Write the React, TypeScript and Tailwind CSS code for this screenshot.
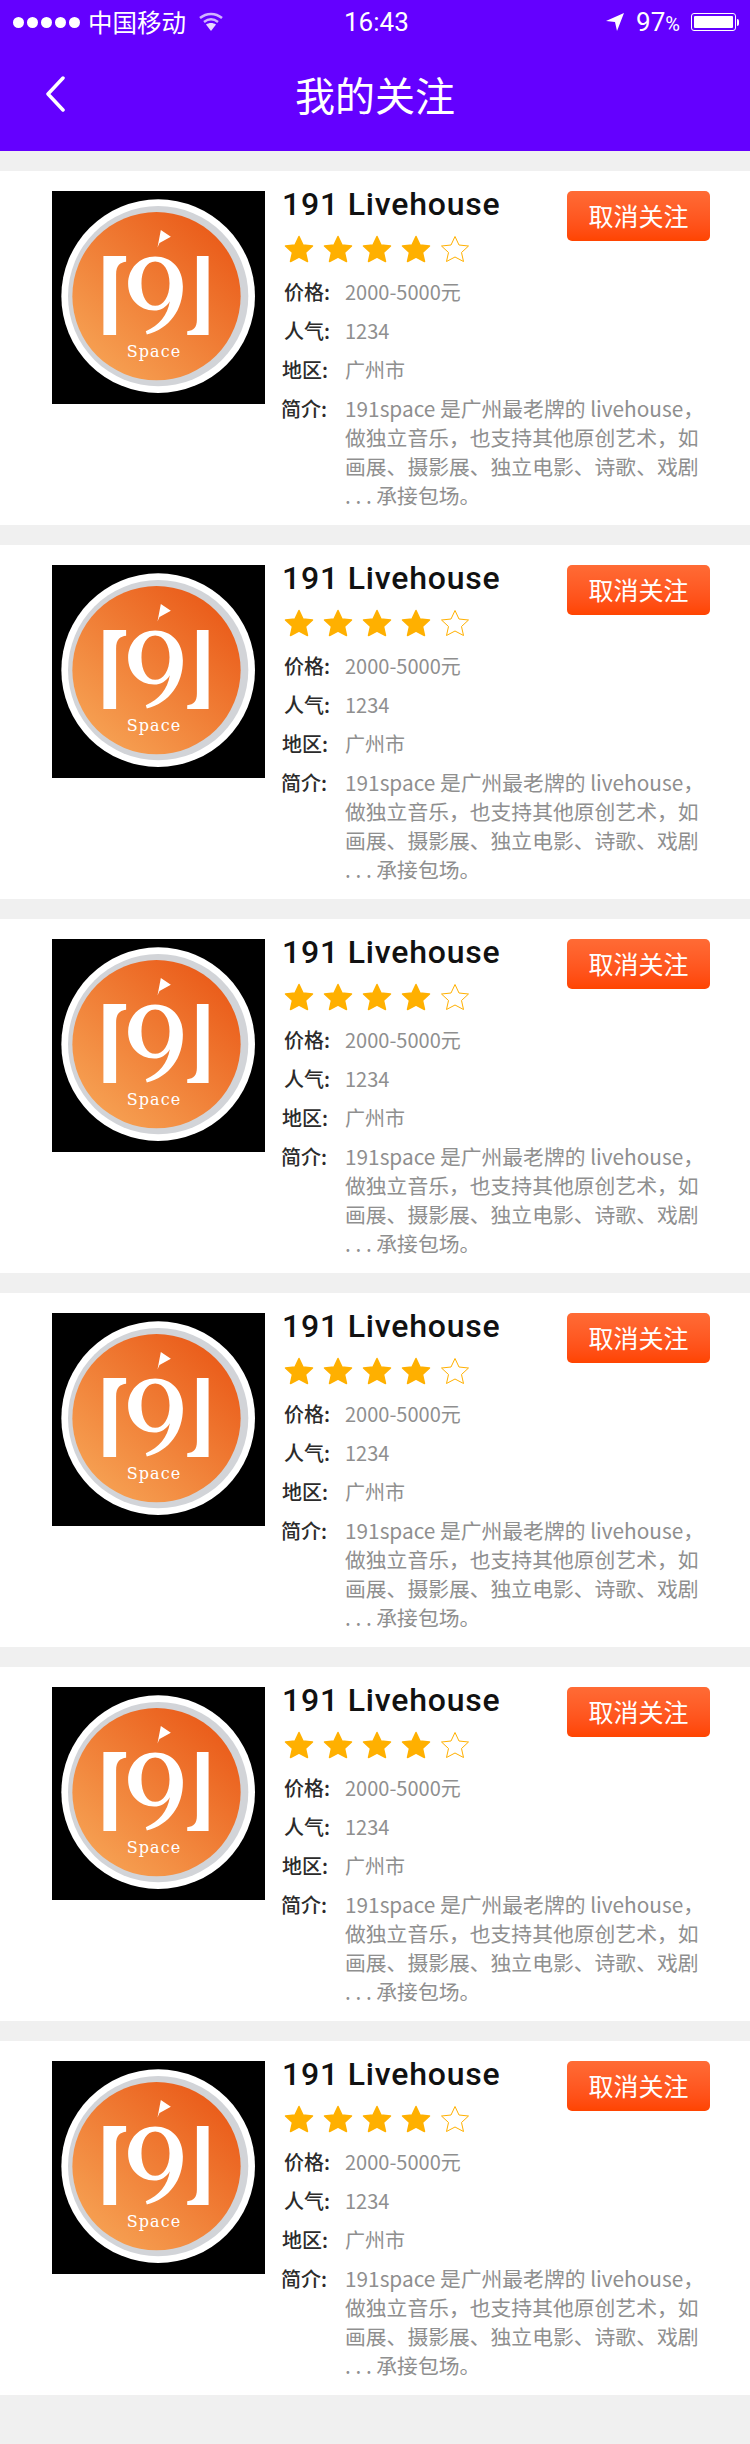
const venues = [1, 2, 3, 4, 5, 6];

// 191 Space logo, coordinates taken from the 213px image at 3x
const VenueLogo = () => (
  <svg viewBox="0 0 638 638" className="block h-[213px] w-[213px] shrink-0 bg-black">
    <defs>
      <linearGradient id="logoOrange" x1="0.15" y1="0.9" x2="0.85" y2="0.1">
        <stop offset="0" stopColor="#f6a052" />
        <stop offset="1" stopColor="#ea5c1a" />
      </linearGradient>
    </defs>
    <circle cx="318" cy="315" r="290" fill="#ffffff" />
    <circle cx="318" cy="315" r="270" fill="#d2d4d8" />
    <circle cx="313" cy="315" r="252" fill="url(#logoOrange)" />
    <path d="M154 195H222V212C205 214 192 222 192 250V431H154Z" fill="#fff" />
    <path d="M469 195V431H405V420C425 418 434 408 434 385V195Z" fill="#fff" />
    <path
      d="M309 196C358 196 392 232 392 286C392 356 352 412 284 430L281 420C322 402 346 372 353 330C342 348 326 358 306 358C262 358 228 324 228 278C228 232 262 196 309 196ZM309 211C284 211 268 238 268 276C268 316 284 344 309 344C334 344 352 316 352 276C352 238 334 211 309 211Z"
      fill="#fff"
    />
    <path d="M326 117L356 137L322 156L316 169Z" fill="#fff" />
    <text x="304" y="498" textAnchor="middle" fill="#fff" fontSize="48" fontFamily="'DejaVu Serif', serif" textLength="160">
      Space
    </text>
  </svg>
);

const Star = ({ filled }: { filled: boolean }) => (
  <svg viewBox="0 0 30 28" className="block h-7 w-[30px]">
    <path
      d="M15 1.5L19 10L28.5 11L21.5 17.5L23.5 26.5L15 22L6.5 26.5L8.5 17.5L1.5 11L11 10Z"
      fill={filled ? '#ffb000' : '#ffffff'}
      stroke="#ffb000"
      strokeWidth={filled ? 1.5 : 1}
      strokeLinejoin="round"
    />
  </svg>
);

const InfoRow = ({ label, offset, children }: { label: string; offset: string; children: React.ReactNode }) => (
  <div className="flex items-start text-[20px] leading-[29px]">
    <span className={`w-[61px] shrink-0 font-medium text-[#2b2b2b] ${offset}`}>{label}:</span>
    <div className="min-w-0 flex-1 text-[#8f8f8f]">{children}</div>
  </div>
);

const VenueCard = () => (
  <div className="flex h-[354px] bg-white pt-5 pl-[52px]">
    <VenueLogo />
    <div className="ml-[17px] w-[428px]">
      <div className="flex items-start">
        <div className="flex-1">
          <h2 className="font-['Roboto'] text-[32px] leading-[27px] font-medium tracking-[0.8px] text-[#111111]">191 Livehouse</h2>
          <div className="mt-[17px] ml-[2px] flex gap-[9px]">
            {[0, 1, 2, 3, 4].map(i => (
              <Star key={i} filled={i < 4} />
            ))}
          </div>
        </div>
        <button className="h-[50px] w-[143px] rounded-[5px] bg-gradient-to-b from-[#ff6b35] to-[#ff4400] text-[25px] text-white">
          取消关注
        </button>
      </div>
      <div className="mt-[14px] ml-[2px] flex flex-col gap-[10px]">
        <InfoRow label="价格" offset="">2000-5000元</InfoRow>
        <InfoRow label="人气" offset="">1234</InfoRow>
        <InfoRow label="地区" offset="-ml-[2px] mr-[2px]">广州市</InfoRow>
        <InfoRow label="简介" offset="-ml-[3px] mr-[3px]">
          <div className="text-[20.8px]">
            191space 是广州最老牌的 livehouse，
            <br />
            做独立音乐，也支持其他原创艺术，如
            <br />
            画展、摄影展、独立电影、诗歌、戏剧
            <br />. . . 承接包场。
          </div>
        </InfoRow>
      </div>
    </div>
  </div>
);

export default function App() {
  return (
    <div className="min-h-[2444px] bg-[#f0f0f0] font-['Noto_Sans_CJK_SC','Noto_Sans',sans-serif]">
      <header className="h-[151px] bg-[#6400ff] text-white">
        <div className="flex h-10 items-center pl-[13px] pr-[11px] pt-1">
          <div className="flex w-[331px] items-center">
            <div className="flex gap-[3px]">
              {[0, 1, 2, 3, 4].map(i => (
                <span key={i} className="h-[11px] w-[11px] rounded-full bg-white" />
              ))}
            </div>
            <span className="ml-2 text-[24.5px] leading-none">中国移动</span>
            <svg viewBox="0 0 26 20" className="ml-3 h-5 w-[26px]">
              <path d="M13 19L8 12.5C11 10.5 15 10.5 18 12.5Z" fill="#ffffff" fillOpacity="0.85" />
              <path d="M6 10C10.5 6.5 15.5 6.5 20 10" fill="none" stroke="#ffffff" strokeOpacity="0.7" strokeWidth="2.5" />
              <path d="M2 6C8.5 0.5 17.5 0.5 24 6" fill="none" stroke="#ffffff" strokeOpacity="0.7" strokeWidth="2.5" />
            </svg>
          </div>
          <span className="font-['Roboto'] text-[26px] leading-none">16:43</span>
          <div className="ml-auto flex items-center">
            <svg viewBox="0 0 18 18" className="h-[18px] w-[18px]">
              <path d="M18 0L11 18L9 9L0 8Z" fill="#ffffff" />
            </svg>
            <span className="ml-3 font-['Roboto'] text-[26px] leading-none">
              97<span className="text-[20px]">%</span>
            </span>
            <div className="ml-[11px] flex items-center">
              <div className="h-[18px] w-[45px] rounded-[3px] border border-white p-[2px]">
                <div className="h-full w-full rounded-[1px] bg-white" />
              </div>
              <div className="ml-[1px] h-[7px] w-[2px] rounded-r-full bg-white" />
            </div>
          </div>
        </div>
        <div className="grid h-[111px] grid-cols-[1fr_auto_1fr] items-center pb-[3px]">
          <svg viewBox="0 0 20 36" className="ml-[45px] h-9 w-5">
            <path d="M18 2L3 18L18 34" fill="none" stroke="#ffffff" strokeWidth="3.5" strokeLinecap="round" strokeLinejoin="round" />
          </svg>
          <h1 className="text-[40px] leading-none">我的关注</h1>
        </div>
      </header>
      <main className="flex flex-col gap-5 pt-5">
        {venues.map(id => (
          <VenueCard key={id} />
        ))}
      </main>
    </div>
  );
}
